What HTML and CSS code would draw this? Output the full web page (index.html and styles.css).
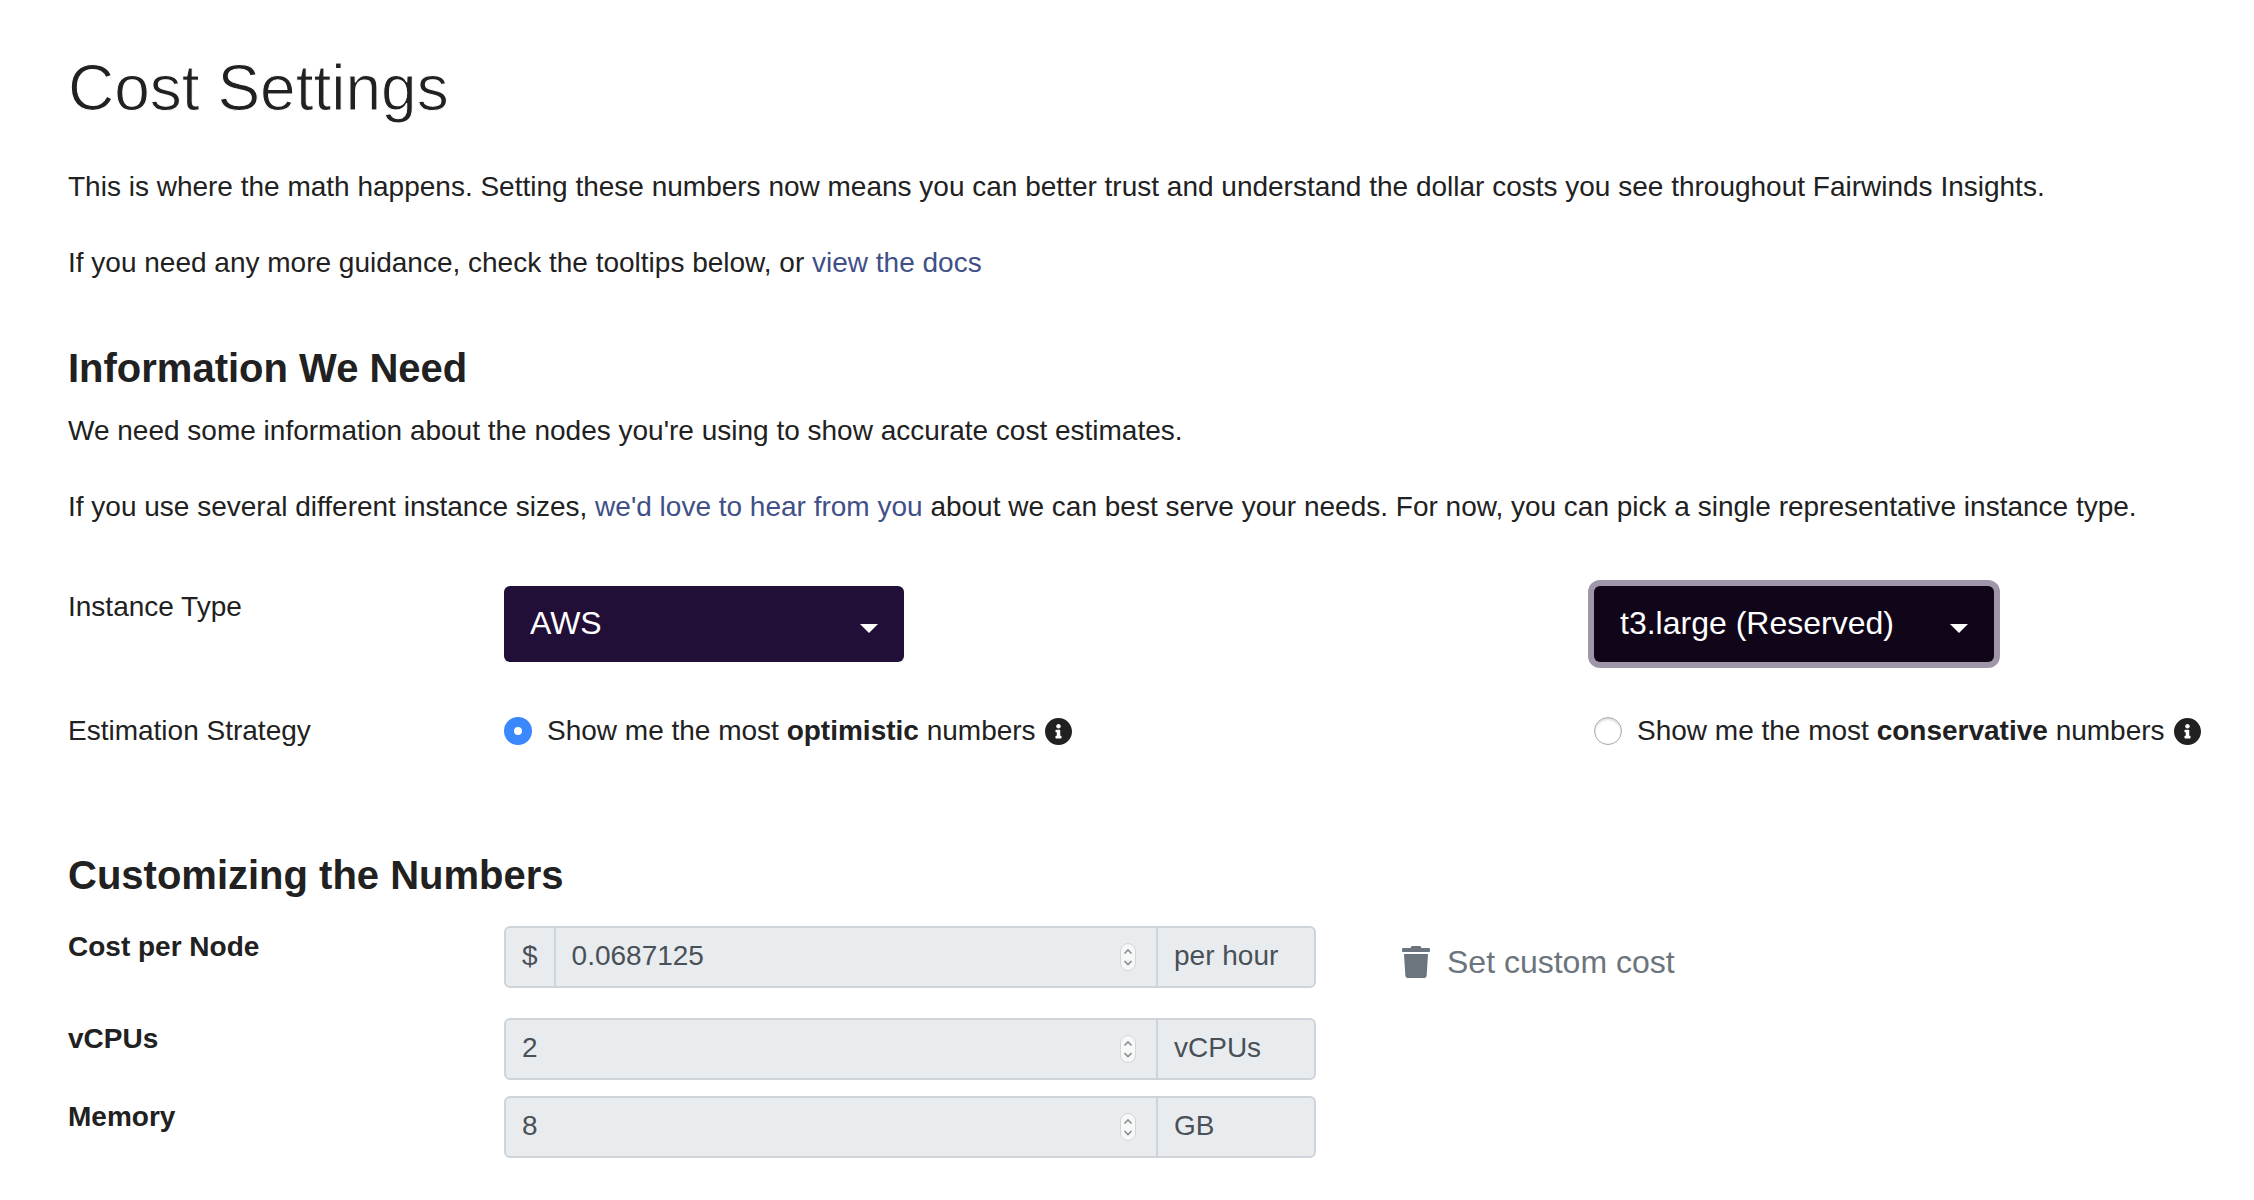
FILE: index.html
```html
<!DOCTYPE html>
<html lang="en">
<head>
<meta charset="utf-8">
<title>Cost Settings</title>
<link rel="stylesheet" href="styles.css">
</head>
<body>
<svg class="sprite" aria-hidden="true">
  <symbol id="icon-info" viewBox="8 8 496 496"><path fill="currentColor" d="M256 8C119 8 8 119 8 256s111 248 248 248 248-111 248-248S393 8 256 8zm0 110c23.200 0 42 18.800 42 42s-18.800 42-42 42-42-18.800-42-42 18.800-42 42-42zm56 254c0 6.600-5.400 12-12 12h-88c-6.600 0-12-5.400-12-12v-24c0-6.600 5.400-12 12-12h12v-64h-12c-6.600 0-12-5.400-12-12v-24c0-6.600 5.400-12 12-12h64c6.600 0 12 5.400 12 12v100h12c6.600 0 12 5.400 12 12v24z"/></symbol>
  <symbol id="icon-trash" viewBox="0 0 448 512"><path fill="currentColor" d="M432 32H312l-9.400-18.700A24 24 0 0 0 281.100 0H166.800a23.700 23.700 0 0 0-21.400 13.300L136 32H16A16 16 0 0 0 0 48v32a16 16 0 0 0 16 16h416a16 16 0 0 0 16-16V48a16 16 0 0 0-16-16zM53.200 467a48 48 0 0 0 47.900 45h245.800a48 48 0 0 0 47.900-45L416 128H32z"/></symbol>
  <symbol id="icon-stepper" viewBox="0 0 16 28"><rect x="0.500" y="0.500" width="15" height="27" rx="7.500" fill="#f7f8f8" stroke="#d3d6d9"/><path d="M4.500 10.500 8 7l3.500 3.500M4.500 18 8 21.500l3.500-3.500" fill="none" stroke="#8b8f93" stroke-width="1.700"/></symbol>
</svg>
<main class="page">
  <h1 class="title">Cost Settings</h1>
  <p class="text">This is where the math happens. Setting these numbers now means you can better trust and understand the dollar costs you see throughout Fairwinds Insights.</p>
  <p class="text">If you need any more guidance, check the tooltips below, or <a class="link" href="#docs">view the docs</a></p>

  <section class="section">
    <h2 class="heading">Information We Need</h2>
    <p class="text">We need some information about the nodes you're using to show accurate cost estimates.</p>
    <p class="text">If you use several different instance sizes, <a class="link" href="#contact">we'd love to hear from you</a> about we can best serve your needs. For now, you can pick a single representative instance type.</p>
    <div class="choices">
      <div class="row">
        <label class="name" for="provider">Instance Type</label>
        <div class="picker"><select id="provider" class="select"><option>AWS</option></select></div>
        <div class="picker"><select class="select select-active" aria-label="Instance size"><option>t3.large (Reserved)</option></select></div>
      </div>
      <div class="row" role="radiogroup" aria-labelledby="strategy">
        <span id="strategy">Estimation Strategy</span>
        <label class="option"><input class="radio" type="radio" name="strategy" checked><span>Show me the most <b>optimistic</b> numbers</span><svg class="info"><use href="#icon-info"/></svg></label>
        <label class="option"><input class="radio" type="radio" name="strategy"><span>Show me the most <b>conservative</b> numbers</span><svg class="info"><use href="#icon-info"/></svg></label>
      </div>
    </div>
  </section>

  <section class="section numbers">
    <h2 class="heading">Customizing the Numbers</h2>
    <div class="row cost-row">
      <label class="name strong" for="cost">Cost per Node</label>
      <div class="cost">
        <div class="group"><span class="prefix">$</span><input id="cost" class="number" type="number" value="0.0687125" disabled><svg class="stepper"><use href="#icon-stepper"/></svg><span class="unit">per hour</span></div>
        <button class="custom" type="button"><svg class="trash"><use href="#icon-trash"/></svg>Set custom cost</button>
      </div>
    </div>
    <div class="row field-row">
      <label class="name strong" for="cpus">vCPUs</label>
      <div class="group"><input id="cpus" class="number" type="number" value="2" disabled><svg class="stepper"><use href="#icon-stepper"/></svg><span class="unit">vCPUs</span></div>
    </div>
    <div class="row field-row">
      <label class="name strong" for="memory">Memory</label>
      <div class="group"><input id="memory" class="number" type="number" value="8" disabled><svg class="stepper"><use href="#icon-stepper"/></svg><span class="unit">GB</span></div>
    </div>
  </section>
</main>
</body>
</html>
```
FILE: styles.css
```css
* { box-sizing: border-box; }

body {
  margin: 0;
  background: #fff;
  color: #212121;
  font: 28px/38px "Liberation Sans", Arial, sans-serif;
}

.sprite { display: none; }

.page { padding: 50px 6px 36px 68px; }

.title {
  margin: 0 0 42px;
  font-size: 64px;
  font-weight: 400;
  line-height: 76px;
  /* thins the regular face into a light display weight */
  -webkit-text-stroke: 1px #fff;
}

.text { margin: 0 0 38px; }

.link { color: #3f5088; text-decoration: none; }

.section { margin-top: 62px; }

.heading {
  margin: 0 0 20px;
  font-size: 40px;
  font-weight: 700;
  line-height: 48px;
}

.row {
  display: grid;
  grid-template-columns: 20% 50% 1fr;
  align-items: start;
}

.choices {
  display: grid;
  gap: 50px;
  margin-top: 60px;
}

.picker {
  position: relative;
  width: 400px;
  max-width: 100%;
}

.picker::after {
  content: "";
  position: absolute;
  right: 26px;
  top: 38px;
  border: 9px solid transparent;
  border-top-color: #fff;
  border-bottom: 0;
  pointer-events: none;
}

.select {
  display: block;
  width: 100%;
  height: 76px;
  padding: 0 60px 2px 26px;
  border: 0;
  border-radius: 6px;
  appearance: none;
  background: #220f38;
  color: #fff;
  font: inherit;
  font-size: 32px;
}

.select-active {
  background: #110619;
  box-shadow: 0 0 0 6px #a096a9;
}

.option {
  display: flex;
  align-items: center;
  white-space: nowrap;
}

.radio {
  flex: none;
  appearance: none;
  width: 28px;
  height: 28px;
  margin: 0 15px 0 0;
  border: 1px solid #a8a8a8;
  border-radius: 50%;
  background: #fff;
  box-shadow: inset 0 2px 2px #e0e0e0;
}

.radio:checked {
  border: 10px solid #3b87fd;
  box-shadow: none;
}

.info {
  flex: none;
  width: 27px;
  height: 27px;
  margin-left: 9px;
}

.numbers { margin-top: 101px; }

.numbers .heading { margin-bottom: 27px; }

.name { padding-top: 2px; }

.strong { font-weight: 700; }

.cost-row { grid-template-columns: 20% 1fr; margin-bottom: 30px; }

.field-row { grid-template-columns: 20% 1fr; margin-bottom: 16px; }

.cost {
  display: flex;
  align-items: center;
  gap: 86px;
}

.group {
  display: flex;
  align-items: center;
  width: 812px;
  height: 62px;
  overflow: hidden;
  border: 2px solid #ced4da;
  border-radius: 6px;
  background: #e9ecef;
  color: #495057;
}

.prefix,
.unit {
  flex: none;
  padding: 9px 16px 11px;
}

.prefix { border-right: 2px solid #ced4da; }

.unit { width: 158px; border-left: 2px solid #ced4da; }

.number {
  flex: 1;
  min-width: 0;
  height: 58px;
  padding: 0 16px 2px;
  border: 0;
  appearance: textfield;
  background: transparent;
  color: inherit;
  font: inherit;
}

.stepper {
  flex: none;
  width: 16px;
  height: 28px;
  margin-right: 20px;
}

.custom {
  display: flex;
  align-items: center;
  gap: 17px;
  padding: 10px 0 0;
  border: 0;
  background: none;
  color: #6c757d;
  font: inherit;
  font-size: 32px;
}

.trash { width: 28px; height: 32px; }
```
